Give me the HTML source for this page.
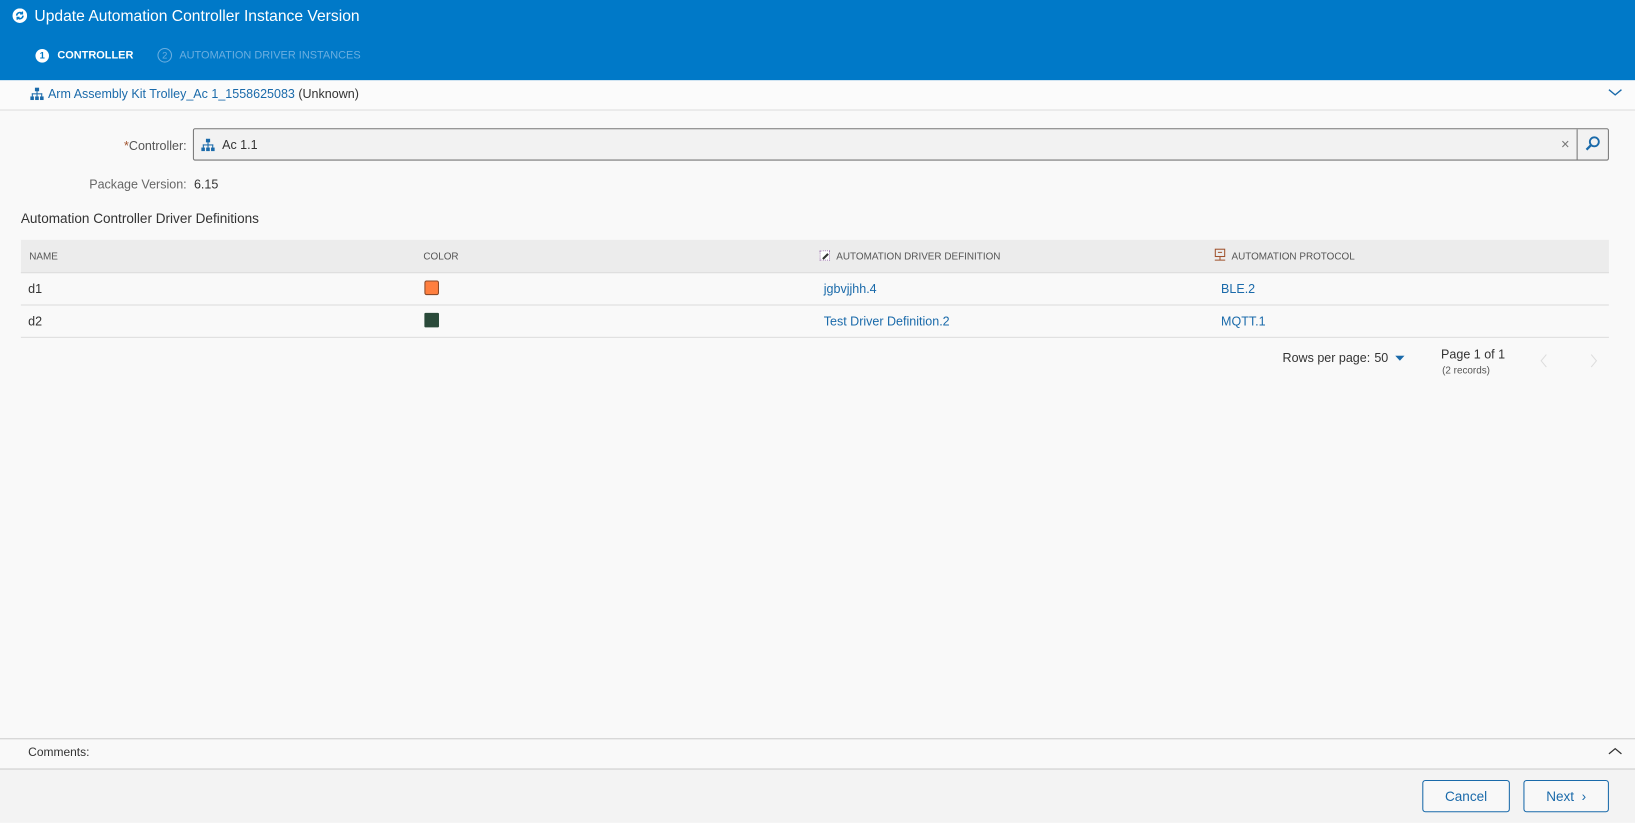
<!DOCTYPE html>
<html><head><meta charset="utf-8"><style>
*{box-sizing:border-box;margin:0;padding:0}
body{width:1635px;height:820px;background:#f9f9f9;font-family:"Liberation Sans",sans-serif;font-size:12px;color:#333;position:relative;overflow:hidden}
#w{position:absolute;left:0;top:0;width:1568px;height:787px;transform:scale(1.04273);transform-origin:0 0}
.abs{position:absolute}
.hdr{left:0;top:0;width:1568px;height:77px;background:#0079c8}
.lnk{color:#1a6aaa}
.th{font-size:9.5px;color:#555;top:241px}
.td{font-size:12px;top:270px}
.btn{border:1px solid #1a6aaa;border-radius:3px;color:#1a6aaa;font-size:13px;text-align:center;line-height:29px;background:#f8f8f8}
</style></head><body><div id="w">
<div class="abs hdr"></div>
<svg class="abs" style="left:12px;top:8px" width="14" height="14" viewBox="0 0 14 14"><circle cx="7" cy="7" r="7" fill="#fff"/><path d="M4 7a3 3 0 0 1 5-2.2M10 7a3 3 0 0 1-5 2.2" stroke="#0079c8" stroke-width="1.5" fill="none"/><path d="M9.5 3v2.3H7.2M4.5 11V8.7h2.3" stroke="#0079c8" stroke-width="1.3" fill="none"/></svg>
<div class="abs" style="left:33px;top:7px;color:#fff;font-size:15px">Update Automation Controller Instance Version</div>
<div class="abs" style="left:34px;top:47px;width:13px;height:13px;border-radius:50%;background:#fff;color:#0079c8;font-size:9px;font-weight:bold;text-align:center;line-height:13px">1</div>
<div class="abs" style="left:55px;top:47px;color:#fff;font-size:10.5px;font-weight:bold">CONTROLLER</div>
<div class="abs" style="left:151px;top:46px;width:14px;height:14px;border-radius:50%;border:1px solid #6aaee0;color:#6aaee0;font-size:9px;text-align:center;line-height:12px">2</div>
<div class="abs" style="left:172px;top:47px;color:#6aaee0;font-size:10.5px">AUTOMATION DRIVER INSTANCES</div>
<div class="abs" style="left:0;top:77px;width:1568px;height:29px;background:#fbfbfb;border-bottom:1px solid #ddd"></div>
<svg class="abs" style="left:29px;top:84px" width="13" height="12" viewBox="0 0 13 12"><g fill="#1a6aaa"><rect x="4.5" y="0" width="4" height="3.5"/><rect x="0" y="8.5" width="3.5" height="3.5"/><rect x="4.7" y="8.5" width="3.5" height="3.5"/><rect x="9.4" y="8.5" width="3.5" height="3.5"/><rect x="6" y="3" width="1" height="5.5"/><rect x="1.5" y="5.5" width="10" height="1"/><rect x="1.5" y="5.5" width="1" height="3"/><rect x="10.5" y="5.5" width="1" height="3"/></g></svg>
<div class="abs" style="left:46px;top:83px;font-size:12px"><span class="lnk">Arm Assembly Kit Trolley_Ac 1_1558625083</span> (Unknown)</div>
<svg class="abs" style="left:1542px;top:85px" width="14" height="8"><path d="M1 1l6 5 6-5" stroke="#1a6aaa" fill="none" stroke-width="1.3"/></svg>
<div class="abs" style="left:60px;width:119px;text-align:right;top:133px;color:#555"><span style="color:#a0522d">*</span>Controller:</div>
<div class="abs" style="left:185px;top:123px;width:1358px;height:31px;border:1px solid #777;border-radius:2px;background:#f2f2f2"></div>
<svg class="abs" style="left:193px;top:133px" width="13" height="12" viewBox="0 0 13 12"><g fill="#1a6aaa"><rect x="4.5" y="0" width="4" height="3.5"/><rect x="0" y="8.5" width="3.5" height="3.5"/><rect x="4.7" y="8.5" width="3.5" height="3.5"/><rect x="9.4" y="8.5" width="3.5" height="3.5"/><rect x="6" y="3" width="1" height="5.5"/><rect x="1.5" y="5.5" width="10" height="1"/><rect x="1.5" y="5.5" width="1" height="3"/><rect x="10.5" y="5.5" width="1" height="3"/></g></svg>
<div class="abs" style="left:213px;top:132px;font-size:12px">Ac 1.1</div>
<div class="abs" style="left:1497px;top:130px;font-size:14px;color:#777">×</div>
<div class="abs" style="left:1512px;top:124px;width:1px;height:29px;background:#777"></div>
<svg class="abs" style="left:1520px;top:130px" width="15" height="15"><circle cx="9" cy="6" r="4.3" stroke="#1a6aaa" stroke-width="1.8" fill="none"/><path d="M6 9l-4.5 4.5" stroke="#1a6aaa" stroke-width="2.2"/></svg>
<div class="abs" style="left:40px;width:139px;text-align:right;top:170px;color:#666">Package Version:</div>
<div class="abs" style="left:186px;top:170px">6.15</div>
<div class="abs" style="left:20px;top:202px;font-size:13px">Automation Controller Driver Definitions</div>
<div class="abs" style="left:20px;top:230px;width:1523px;height:32px;background:#ececec;border-bottom:1px solid #ddd"></div>
<div class="abs" style="left:20px;top:292px;width:1523px;height:1px;background:#ddd"></div>
<div class="abs" style="left:20px;top:323px;width:1523px;height:1px;background:#ddd"></div>
<div class="abs th" style="left:28px">NAME</div>
<div class="abs th" style="left:406px">COLOR</div>
<div class="abs" style="left:786px;top:240px;width:10px;height:10px;border:1px dotted #a07ab0;background:#fff"><div style="position:absolute;left:1px;top:4px;width:7px;height:1.5px;background:#333;transform:rotate(-45deg)"></div></div>
<div class="abs th" style="left:802px">AUTOMATION DRIVER DEFINITION</div>
<svg class="abs" style="left:1164px;top:238px" width="12" height="13"><rect x="1.5" y="1" width="9" height="7" stroke="#a0522d" fill="none"/><path d="M4 4h4M6 8v3M1 11.5h10" stroke="#a0522d"/></svg>
<div class="abs th" style="left:1181px">AUTOMATION PROTOCOL</div>
<div class="abs td" style="left:27px">d1</div>
<div class="abs" style="left:407px;top:269px;width:14px;height:14px;background:#ff7f3f;border:1px solid #8a4a2a;border-radius:2px"></div>
<div class="abs td lnk" style="left:790px">jgbvjjhh.4</div>
<div class="abs td lnk" style="left:1171px">BLE.2</div>
<div class="abs td" style="left:27px;top:301px">d2</div>
<div class="abs" style="left:407px;top:300px;width:14px;height:14px;background:#2a4a3a;border-radius:1px"></div>
<div class="abs td lnk" style="left:790px;top:301px">Test Driver Definition.2</div>
<div class="abs td lnk" style="left:1171px;top:301px">MQTT.1</div>
<div class="abs" style="left:1230px;top:336px">Rows per page:</div>
<div class="abs" style="left:1318px;top:336px">50</div>
<svg class="abs" style="left:1338px;top:341px" width="9" height="5"><path d="M0 0h9L4.5 5z" fill="#1a6aaa"/></svg>
<div class="abs" style="left:1382px;top:333px">Page 1 of 1</div>
<div class="abs" style="left:1383px;top:350px;font-size:9.5px;color:#555">(2 records)</div>
<svg class="abs" style="left:1476px;top:339px" width="60" height="14"><path d="M7 1L2 7l5 6M50 1l5 6-5 6" stroke="#ddd" fill="none"/></svg>
<div class="abs" style="left:0;top:708px;width:1568px;height:1px;background:#ccc"></div>
<div class="abs" style="left:27px;top:716px;font-size:11.5px">Comments:</div>
<svg class="abs" style="left:1542px;top:716px" width="14" height="8"><path d="M1 7l6-5 6 5" stroke="#333" fill="none" stroke-width="1.2"/></svg>
<div class="abs" style="left:0;top:737px;width:1568px;height:52px;background:#f3f3f3;border-top:1px solid #ccc"></div>
<div class="abs btn" style="left:1364px;top:748px;width:84px;height:31px">Cancel</div>
<div class="abs btn" style="left:1461px;top:748px;width:82px;height:31px">Next &nbsp;›</div>
</div></body></html>
